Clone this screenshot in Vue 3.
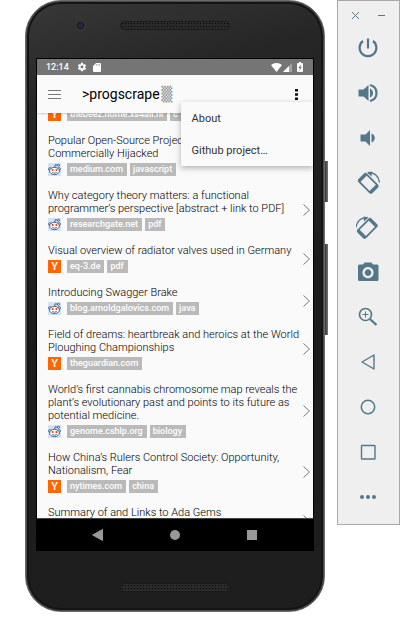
<script setup>
import { ref } from 'vue'

const menuOpen = ref(true)

const stories = [
  { source: 'hn', title: '', tags: ['thebeez.home.xs4all.nl', 'c'] },
  { source: 'reddit', title: 'Popular Open-Source Project\nCommercially Hijacked', tags: ['medium.com', 'javascript'] },
  { source: 'reddit', title: 'Why category theory matters: a functional programmer’s perspective [abstract + link to PDF]', tags: ['researchgate.net', 'pdf'] },
  { source: 'hn', title: 'Visual overview of radiator valves used in Germany', tags: ['eq-3.de', 'pdf'] },
  { source: 'reddit', title: 'Introducing Swagger Brake', tags: ['blog.arnoldgalovics.com', 'java'] },
  { source: 'hn', title: 'Field of dreams: heartbreak and heroics at the World Ploughing Championships', tags: ['theguardian.com'] },
  { source: 'reddit', title: 'World’s first cannabis chromosome map reveals the plant’s evolutionary past and points to its future as potential medicine.', tags: ['genome.cshlp.org', 'biology'] },
  { source: 'hn', title: 'How China’s Rulers Control Society: Opportunity, Nationalism, Fear', tags: ['nytimes.com', 'china'] },
  { source: '', title: 'Summary of and Links to Ada Gems', tags: [] }
]
</script>

<template>
  <main class="desktop">
    <section class="phone">
      <span class="camera"></span>
      <span class="speaker speaker-top"></span>
      <span class="side-key power-key"></span>
      <span class="side-key volume-key"></span>

      <div class="screen">
        <div class="status">
          <span class="clock">12:14</span>
          <svg class="gear" width="10" height="10" viewBox="0 0 24 24"><path fill="#fff" fill-rule="evenodd" d="M19.4 13c0-.3.1-.6.1-1s0-.7-.1-1l2.100-1.600c.2-.2.3-.4.100-.6l-2-3.500c-.1-.2-.4-.3-.6-.2l-2.500 1c-.5-.4-1.100-.7-1.700-1l-.4-2.600c0-.3-.2-.5-.5-.5h-4c-.2 0-.5.2-.5.4l-.3 2.700c-.6.2-1.200.6-1.700 1l-2.500-1c-.2-.1-.5 0-.6.2l-2 3.500c-.1.2-.1.5.1.600L4.500 11c0 .3-.1.600-.1 1s0 .7.100 1l-2.100 1.600c-.2.200-.2.400-.1.600l2 3.500c.1.200.4.300.6.200l2.500-1c.5.4 1.100.7 1.700 1l.4 2.600c0 .300.2.500.5.500h4c.2 0 .5-.2.5-.5l.4-2.600c.6-.300 1.200-.6 1.700-1l2.500 1c.2.100.5 0 .6-.2l2-3.500c.1-.2.1-.5-.1-.6zM12 15.500a3.500 3.500 0 1 1 0-7 3.500 3.500 0 0 1 0 7z" /></svg>
          <svg class="card" width="8" height="9" viewBox="0 0 8 9"><path fill="#fff" d="M3 0h4q1 0 1 1v7q0 1-1 1H1q-1 0-1-1V3z" /><path stroke="#999" stroke-width=".7" d="M3.300 1v1.700M4.900 1v1.700M6.500 1v1.700" /></svg>
          <span class="grow"></span>
          <svg width="11" height="9" viewBox="0 0 11 9"><path fill="#fff" d="M5.500 9 0 2Q2.300 0 5.500 0T11 2z" /></svg>
          <svg class="signal" width="9" height="9" viewBox="0 0 9 9"><path fill="#a4a4a4" d="M9 0v9H0z" /><path fill="#fff" d="M6 3v6H0z" /></svg>
          <svg class="battery" width="6" height="10" viewBox="0 0 6 10"><path fill="#fff" d="M2 0h2v1h1q1 0 1 1v7q0 1-1 1H1Q0 10 0 9V2q0-1 1-1h1z" /><path fill="#777" d="M3.500 2.500 1.500 6h1.200v2.500L4.700 5H3.500z" /></svg>
        </div>

        <header class="appbar">
          <button class="bare menu-button" aria-label="Navigation">
            <svg width="13" height="9" viewBox="0 0 13 9"><path stroke="#777" stroke-width="1" d="M0 .5h13M0 4.500h13M0 8.500h13" /></svg>
          </button>
          <h1>&gt;progscrape <span class="shade">▒</span></h1>
          <button class="bare more-button" aria-label="More" @click="menuOpen = !menuOpen">
            <svg width="3" height="11" viewBox="0 0 3 11"><path fill="#111" d="M0 0h3v2.500H0zM0 4.200h3v2.500H0zM0 8.500h3V11H0z" /></svg>
          </button>
          <div v-if="menuOpen" class="popup">
            <button>About</button>
            <button>Github project…</button>
          </div>
        </header>

        <div class="feed">
          <ul>
            <li v-for="(s, i) in stories" :key="i" :class="{ leading: !s.title }">
              <div class="story">
                <h2 v-if="s.title">{{ s.title }}</h2>
                <div class="tags">
                  <span v-if="s.source === 'hn'" class="hn">Y</span>
                  <svg v-else-if="s.source === 'reddit'" class="reddit" width="13" height="13" viewBox="0 0 26 26">
                    <path fill="#cee3f8" d="M0 0h26v26H0z" />
                    <g stroke="#233a58" stroke-width="1.500" fill="#fff">
                      <path fill="none" d="m13 9 1.500-5.500 5 1" />
                      <circle cx="21" cy="4.500" r="2" />
                      <circle cx="3.800" cy="12" r="2.600" />
                      <circle cx="22.200" cy="12" r="2.600" />
                      <ellipse cx="13" cy="16" rx="9.800" ry="7.300" />
                      <path fill="none" d="M8.500 19q4.500 3 9 0" />
                    </g>
                    <circle cx="9.200" cy="14" r="2" fill="#f03010" />
                    <circle cx="16.800" cy="14" r="2" fill="#f03010" />
                  </svg>
                  <a v-for="t in s.tags" :key="t" href="#">{{ t }}</a>
                </div>
              </div>
              <svg v-if="s.title" class="chevron" width="7" height="12" viewBox="0 0 7 12"><path fill="none" stroke="#777" d="m.5.5 6 5.500-6 5.500" /></svg>
            </li>
          </ul>
        </div>

        <nav class="navbar">
          <button class="bare" aria-label="Back"><svg width="12" height="12" viewBox="0 0 12 12"><path fill="#999" d="M10.500.5v11L.7 6z" stroke="#999" stroke-linejoin="round" /></svg></button>
          <button class="bare" aria-label="Home"><svg width="12" height="12" viewBox="0 0 12 12"><circle cx="6" cy="6" r="5" fill="#999" /></svg></button>
          <button class="bare" aria-label="Overview"><svg width="12" height="12" viewBox="0 0 12 12"><path fill="#999" d="M1 1h10v10H1z" /></svg></button>
        </nav>
      </div>
      <span class="speaker speaker-bottom"></span>
    </section>

    <aside class="emulator">
      <div class="window-keys">
        <button class="bare" aria-label="Close"><svg width="9" height="9" viewBox="0 0 9 9"><path d="m1 1 7 7M8 1 1 8" /></svg></button>
        <button class="bare" aria-label="Minimize"><svg width="9" height="9" viewBox="0 0 9 9"><path d="M1 4.500h7" /></svg></button>
      </div>
      <div class="tools">
        <button class="bare" aria-label="Power"><svg width="24" height="24" viewBox="0 0 24 24"><path stroke-width="2.200" d="M12 2.500v10M7 5a8.400 8.400 0 1 0 10 0" /></svg></button>
        <button class="bare" aria-label="Volume up"><svg width="24" height="24" viewBox="0 0 24 24"><path class="solid" d="M2.500 8.500h5L12.500 4v16l-5-4.500h-5zM14 7.500q3 1.300 3 4.500t-3 4.500z" /><path stroke-width="2.200" d="M14 4q6.500 1.500 6.500 8T14 20" /></svg></button>
        <button class="bare" aria-label="Volume down"><svg width="24" height="24" viewBox="0 0 24 24"><path class="solid" d="M4.500 8.500h5L14 4v16l-4.500-4.500h-5zM15.500 7.500q3.300 1.300 3.300 4.500t-3.300 4.500z" /></svg></button>
        <button class="bare" aria-label="Rotate left"><svg width="24" height="24" viewBox="0 0 24 24"><g transform="rotate(-45 12 12.500)"><rect x="7" y="3.500" width="10.500" height="18" rx="1.500" stroke-width="1.800" /><path stroke-width="3" d="M7 4.600h10.500M7 20.400h10.500" /></g><path stroke-width="1.300" d="M12 1.500q10 0 11.500 10" /><path class="solid" d="m11 1.500 5-1-.5 5z" /></svg></button>
        <button class="bare" aria-label="Rotate right"><svg width="24" height="24" viewBox="0 0 24 24"><g transform="matrix(-1 0 0 1 23.500 0)"><g transform="rotate(-45 12 12.500)"><rect x="7" y="3.500" width="10.500" height="18" rx="1.500" stroke-width="1.800" /><path stroke-width="3" d="M7 4.600h10.500M7 20.400h10.500" /></g><path stroke-width="1.300" d="M12 1.500q10 0 11.500 10" /><path class="solid" d="m11 1.500 5-1-.5 5z" /></g></svg></button>
        <button class="bare" aria-label="Screenshot"><svg width="24" height="24" viewBox="0 0 24 24"><path class="solid" fill-rule="evenodd" d="M8.500 2.500h7l1.500 2h4q1.500 0 1.500 1.500v13.500q0 1.500-1.500 1.500H3.500Q2 21 2 19.500V6q0-1.500 1.500-1.500h3.500zM12 7a5.600 5.600 0 1 0 .01 0zm0 2.300a3.300 3.300 0 1 1-.01 0z" /></svg></button>
        <button class="bare" aria-label="Zoom"><svg width="24" height="24" viewBox="0 0 24 24"><circle cx="9.500" cy="9.500" r="6" stroke-width="1.700" /><path stroke-width="1" d="M6.500 9.500h6M9.500 6.500v6" /><path stroke-width="2.300" d="m14 14 6.500 6" /></svg></button>
        <button class="bare" aria-label="Back key"><svg width="24" height="24" viewBox="0 0 24 24"><path stroke-width="1.400" stroke-linejoin="round" d="M18 5v14L6 12z" /></svg></button>
        <button class="bare" aria-label="Home key"><svg width="24" height="24" viewBox="0 0 24 24"><circle cx="12" cy="12" r="6.700" stroke-width="1.500" /></svg></button>
        <button class="bare" aria-label="Overview key"><svg width="24" height="24" viewBox="0 0 24 24"><rect x="5.500" y="5.500" width="13.500" height="13.500" rx=".5" stroke-width="1.400" /></svg></button>
        <button class="bare" aria-label="Extended controls"><svg width="24" height="24" viewBox="0 0 24 24"><g class="solid"><circle cx="6" cy="12" r="2" /><circle cx="12" cy="12" r="2" /><circle cx="18" cy="12" r="2" /></g></svg></button>
      </div>
    </aside>
  </main>
</template>

<style>
body {
  margin: 0;
  background: #fff;
}
</style>

<style scoped>
* {
  box-sizing: border-box;
}
.desktop {
  display: flex;
  align-items: flex-start;
  gap: 12px;
  padding-left: 25px;
  font-family: Roboto, "Liberation Sans", sans-serif;
}
svg {
  display: block;
  flex: none;
}
button {
  font: inherit;
  cursor: pointer;
}
.bare {
  display: flex;
  align-items: center;
  justify-content: center;
  padding: 0;
  border: 0;
  background: none;
}

/* Device frame */
.phone {
  position: relative;
  flex: 1;
  min-width: 0;
  display: flex;
  height: calc(100vh - 11px);
  padding: 58px 11px 61px;
  border: 1px solid #6a6a6a;
  border-radius: 36px;
  background: linear-gradient(165deg, #383838 0, #262626 16%, #1c1c1c 50%, #1e1e1e 100%);
  box-shadow: inset 0 0 0 1px #4a4a4a, inset 0 0 0 3px #141414;
}
.camera {
  position: absolute;
  top: 19px;
  left: 49px;
  width: 11px;
  height: 11px;
  border-radius: 50%;
  background: radial-gradient(circle, #2d2440 0 2px, #1c1a22 3px, #3a3a3a 5px);
}
.speaker {
  position: absolute;
  left: 50%;
  width: 110px;
  height: 9px;
  margin-left: -55px;
  border: 1px solid #1a1a1a;
  border-radius: 5px;
  background: radial-gradient(circle, #050505 1px, #2a2a2a 1px) 0 0 / 3px 3px;
}
.speaker-top {
  top: 20px;
}
.speaker-bottom {
  bottom: 19px;
}
.side-key {
  position: absolute;
  right: -4px;
  width: 3px;
  background: linear-gradient(90deg, #333, #777);
}
.power-key {
  top: 160px;
  height: 41px;
}
.volume-key {
  top: 243px;
  height: 91px;
}

.screen {
  flex: 1;
  min-width: 0;
  display: flex;
  flex-direction: column;
  background: #fafafa;
  box-shadow: 0 0 0 1px #000;
}
.status {
  display: flex;
  align-items: center;
  height: 16px;
  padding: 0 10px 0 9px;
  background: #757575;
  color: #fff;
  font-size: 9px;
  font-weight: 500;
}
.gear {
  margin-left: 8px;
}
.card {
  margin-left: 6px;
}
.signal {
  margin-left: 1px;
}
.battery {
  margin-left: 5px;
}
.grow {
  flex: 1;
}
.appbar {
  position: relative;
  z-index: 1;
  display: flex;
  align-items: center;
  height: 38px;
  padding: 0 15px 0 11px;
  background: #fafafa;
  box-shadow: 0 1px 2px rgba(0, 0, 0, .18);
}
h1 {
  flex: 1;
  display: flex;
  align-items: center;
  gap: 2px;
  margin: 0 0 0 21px;
  color: #000;
  font-size: 14px;
  font-weight: 400;
  line-height: 18px;
}
.shade {
  color: #888;
  font-family: "DejaVu Sans", sans-serif;
}
.popup {
  position: absolute;
  top: 27px;
  right: 0;
  display: flex;
  flex-direction: column;
  width: 48%;
  background: #fafafa;
  box-shadow: 0 2px 6px rgba(0, 0, 0, .3);
  clip-path: inset(-8px 0 -12px -8px);
}
.popup button {
  height: 32px;
  padding: 0 11px;
  border: 0;
  background: none;
  color: #333;
  font-size: 11px;
  text-align: left;
}

/* Story list */
.feed {
  flex: 1;
  min-height: 0;
  overflow: hidden;
}
ul {
  margin: -5px 0 0;
  padding: 0;
  list-style: none;
}
li {
  display: flex;
  align-items: center;
  justify-content: space-between;
  padding: 6px 3px 7px 11px;
}
li.leading {
  padding-top: 0;
}
.story {
  min-width: 0;
}
h2 {
  margin: 0 0 3px;
  color: #000;
  font-size: 11px;
  font-weight: 300;
  line-height: 13px;
  white-space: pre-line;
}
.tags {
  display: flex;
  gap: 3px;
  height: 13px;
}
.tags a {
  padding: 0 4px 0 3px;
  background: #bababa;
  color: #fff;
  font-size: 9px;
  font-weight: 500;
  line-height: 13px;
  text-decoration: none;
  white-space: nowrap;
}
.hn {
  width: 13px;
  margin-right: 3px;
  background: #ff6600;
  color: #fff;
  font-size: 11px;
  font-weight: 500;
  line-height: 13px;
  text-align: center;
}
.reddit {
  margin-right: 3px;
}
.navbar {
  display: flex;
  align-items: center;
  justify-content: space-around;
  height: 32px;
  padding: 0 23px;
  border-top: 1px solid #444;
  background: #000;
}

/* Emulator tool strip */
.emulator {
  flex: none;
  display: flex;
  flex-direction: column;
  width: 63px;
  height: calc(100vh - 98px);
  border: 1px solid #a8a8a8;
  background: #efefef;
}
.emulator svg {
  fill: none;
  stroke: #547889;
}
.emulator .solid {
  fill: #547889;
  stroke: none;
}
.window-keys {
  display: flex;
  justify-content: center;
  gap: 17px;
  padding: 10px 0 6px;
}
.tools {
  flex: 1;
  display: grid;
  grid-auto-rows: 1fr;
  padding: 0 1px 5px 0;
}
</style>
